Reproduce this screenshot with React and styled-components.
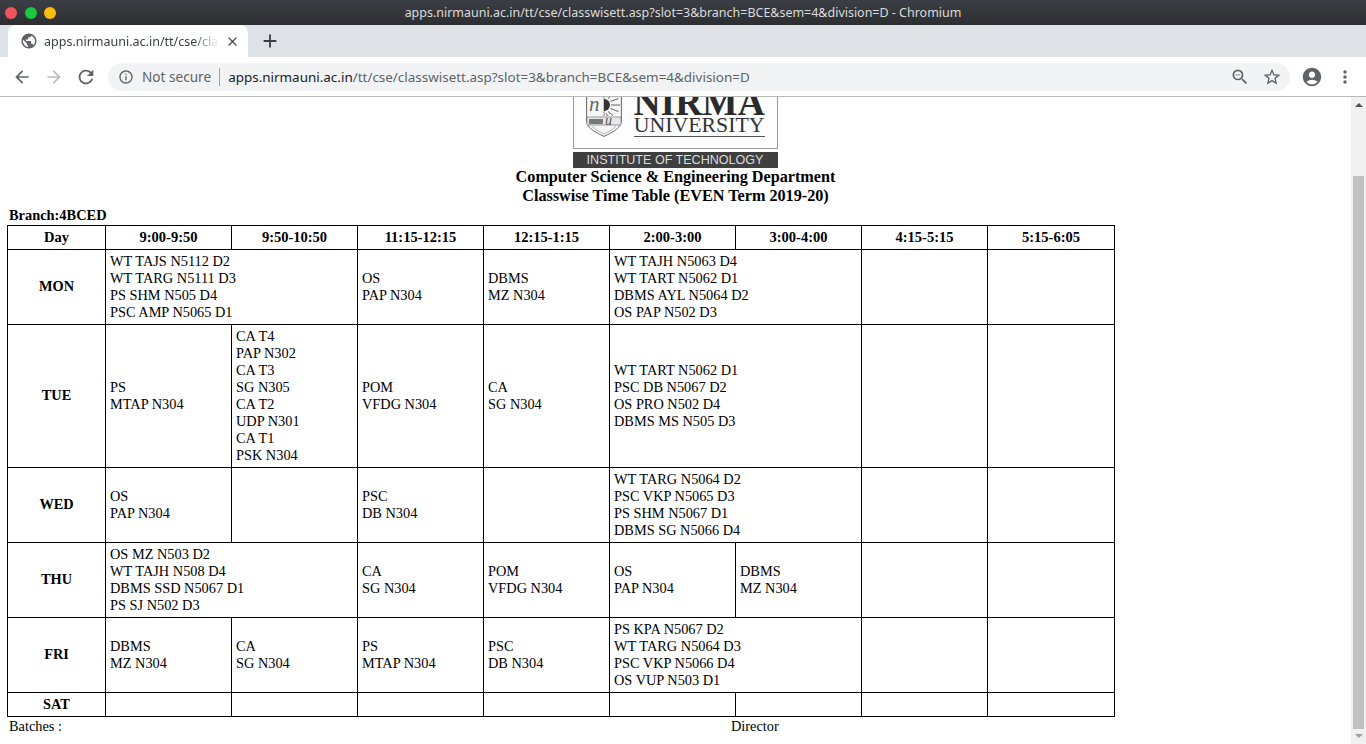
import React from "react";
import styled, { createGlobalStyle } from "styled-components";
import {
  MdArrowBack,
  MdArrowForward,
  MdRefresh,
  MdInfoOutline,
  MdStarBorder,
  MdAccountCircle,
  MdMoreVert,
  MdPublic,
  MdZoomOut,
  MdClose,
  MdAdd,
} from "react-icons/md";

const GlobalStyle = createGlobalStyle`
  html, body {
    margin: 0;
    padding: 0;
    height: 744px;
    overflow: hidden;
    background: #fff;
  }
`;

const times = ["9:00-9:50", "9:50-10:50", "11:15-12:15", "12:15-1:15", "2:00-3:00", "3:00-4:00", "4:15-5:15", "5:15-6:05"];

const rows = [
  {
    day: "MON",
    cells: [
      { span: 2, lines: ["WT TAJS N5112 D2", "WT TARG N5111 D3", "PS SHM N505 D4", "PSC AMP N5065 D1"] },
      { lines: ["OS", "PAP N304"] },
      { lines: ["DBMS", "MZ N304"] },
      { span: 2, lines: ["WT TAJH N5063 D4", "WT TART N5062 D1", "DBMS AYL N5064 D2", "OS PAP N502 D3"] },
      { lines: [] },
      { lines: [] },
    ],
  },
  {
    day: "TUE",
    cells: [
      { lines: ["PS", "MTAP N304"] },
      { lines: ["CA T4", "PAP N302", "CA T3", "SG N305", "CA T2", "UDP N301", "CA T1", "PSK N304"] },
      { lines: ["POM", "VFDG N304"] },
      { lines: ["CA", "SG N304"] },
      { span: 2, lines: ["WT TART N5062 D1", "PSC DB N5067 D2", "OS PRO N502 D4", "DBMS MS N505 D3"] },
      { lines: [] },
      { lines: [] },
    ],
  },
  {
    day: "WED",
    cells: [
      { lines: ["OS", "PAP N304"] },
      { lines: [] },
      { lines: ["PSC", "DB N304"] },
      { lines: [] },
      { span: 2, lines: ["WT TARG N5064 D2", "PSC VKP N5065 D3", "PS SHM N5067 D1", "DBMS SG N5066 D4"] },
      { lines: [] },
      { lines: [] },
    ],
  },
  {
    day: "THU",
    cells: [
      { span: 2, lines: ["OS MZ N503 D2", "WT TAJH N508 D4", "DBMS SSD N5067 D1", "PS SJ N502 D3"] },
      { lines: ["CA", "SG N304"] },
      { lines: ["POM", "VFDG N304"] },
      { lines: ["OS", "PAP N304"] },
      { lines: ["DBMS", "MZ N304"] },
      { lines: [] },
      { lines: [] },
    ],
  },
  {
    day: "FRI",
    cells: [
      { lines: ["DBMS", "MZ N304"] },
      { lines: ["CA", "SG N304"] },
      { lines: ["PS", "MTAP N304"] },
      { lines: ["PSC", "DB N304"] },
      { span: 2, lines: ["PS KPA N5067 D2", "WT TARG N5064 D3", "PSC VKP N5066 D4", "OS VUP N503 D1"] },
      { lines: [] },
      { lines: [] },
    ],
  },
  {
    day: "SAT",
    empty: true,
    cells: Array.from({ length: 8 }, () => ({ lines: [] })),
  },
];

export default function App() {
  return (
    <>
      <GlobalStyle />
      <Window>
        <TitleBar>
          <Lights>
            <Light $color="#f2545b" />
            <Light $color="#19c93f" />
            <Light $color="#fdbc0d" />
          </Lights>
          <TitleText>apps.nirmauni.ac.in/tt/cse/classwisett.asp?slot=3&amp;branch=BCE&amp;sem=4&amp;division=D - Chromium</TitleText>
        </TitleBar>

        <TabStrip>
          <Tab>
            <MdPublic size={18} color="#5f6368" />
            <TabLabel>apps.nirmauni.ac.in/tt/cse/classwisett.asp</TabLabel>
            <MdClose size={15} color="#45474a" />
          </Tab>
          <NewTab>
            <MdAdd size={22} color="#3c4043" />
          </NewTab>
        </TabStrip>

        <Toolbar>
          <NavButton><MdArrowBack size={20} color="#5f6368" /></NavButton>
          <NavButton><MdArrowForward size={20} color="#b9bcc0" /></NavButton>
          <NavButton><MdRefresh size={22} color="#5f6368" /></NavButton>
          <Omnibox>
            <MdInfoOutline size={16} color="#5f6368" />
            <Secure>Not secure</Secure>
            <Divider />
            <Url>
              <b>apps.nirmauni.ac.in</b>/tt/cse/classwisett.asp?slot=3&amp;branch=BCE&amp;sem=4&amp;division=D
            </Url>
            <OmniIcons>
              <MdZoomOut size={20} color="#5f6368" />
              <MdStarBorder size={20} color="#5f6368" />
            </OmniIcons>
          </Omnibox>
          <Profile><MdAccountCircle size={22} color="#5f6368" /></Profile>
          <Menu><MdMoreVert size={20} color="#5f6368" /></Menu>
        </Toolbar>

        <Viewport>
          <Page>
            <Logo>
              <LogoFrame>
                <Crest viewBox="0 0 36 41" aria-hidden="true">
                  <path d="M0.6 -2v26c0 8 8 12 17.4 16.4C27.4 36 35.4 32 35.4 24V-2" fill="#f6f6f6" stroke="#666" strokeWidth="1" />
                  <path d="M18 -2v22" stroke="#777" strokeWidth="0.8" />
                  <path d="M18 3a6 6 0 0 1 0 12z" fill="#333" />
                  <path d="M25 9h9M24.5 5.5l8-3M24.5 12.5l8 3M22 2.5l5-4M22 15.5l5 4M20 17l1.5 3" stroke="#555" strokeWidth="0.9" />
                  <text x="3" y="15" fontFamily="Liberation Serif, serif" fontStyle="italic" fontSize="21" fill="#666">n</text>
                  <path d="M1 21h34v8H1z" fill="#e8e8e8" stroke="#777" strokeWidth="0.7" />
                  <path d="M3 23h14v5H3z" fill="#777" />
                  <text x="19" y="29" fontFamily="Liberation Serif, serif" fontStyle="italic" fontSize="14" fill="#555">u</text>
                  <path d="M6 30c4 4 8 6 12 8 4-2 8-4 12-8" fill="none" stroke="#999" strokeWidth="0.7" />
                </Crest>
                <Wordmark>
                  <Nirma>NIRMA</Nirma>
                  <University>UNIVERSITY</University>
                </Wordmark>
              </LogoFrame>
              <Institute>INSTITUTE OF TECHNOLOGY</Institute>
            </Logo>
            <Heading>Computer Science &amp; Engineering Department</Heading>
            <Heading>Classwise Time Table (EVEN Term 2019-20)</Heading>
            <Branch>Branch:4BCED</Branch>
            <Timetable>
              <colgroup>
                <col width="98" />
                {times.map((t, i) => <col key={t} width={i === 7 ? 127 : 126} />)}
              </colgroup>
              <thead>
                <tr>
                  <HeadCell>Day</HeadCell>
                  {times.map((t) => <HeadCell key={t}>{t}</HeadCell>)}
                </tr>
              </thead>
              <tbody>
                {rows.map((row) => (
                  <tr key={row.day}>
                    <DayCell $empty={row.empty}>{row.day}</DayCell>
                    {row.cells.map((cell, i) => (
                      <SlotCell key={i} colSpan={cell.span || 1}>
                        {cell.lines.map((line) => <Line key={line}>{line}</Line>)}
                      </SlotCell>
                    ))}
                  </tr>
                ))}
              </tbody>
            </Timetable>
            <Footer>
              <span>Batches :</span>
              <Director>Director</Director>
            </Footer>
          </Page>
          <Scrollbar>
            <ArrowUp />
            <ThumbTrack>
              <Thumb />
            </ThumbTrack>
            <ArrowDown />
          </Scrollbar>
        </Viewport>
      </Window>
    </>
  );
}

const Window = styled.div`
  width: 1366px;
  height: 744px;
  display: flex;
  flex-direction: column;
  overflow: hidden;
`;

const TitleBar = styled.div`
  height: 25px;
  flex: none;
  display: flex;
  align-items: center;
  position: relative;
  background: linear-gradient(#3b3e44, #2c2e32);
`;

const Lights = styled.div`
  display: flex;
  gap: 7.5px;
  padding-left: 5px;
`;

const Light = styled.span`
  width: 12px;
  height: 12px;
  border-radius: 50%;
  background: ${(p) => p.$color};
`;

const TitleText = styled.div`
  position: absolute;
  left: 0;
  right: 0;
  text-align: center;
  color: #dcdcdc;
  font: 12.47px "Noto Sans", sans-serif;
`;

const TabStrip = styled.div`
  height: 32px;
  flex: none;
  display: flex;
  align-items: flex-end;
  background: #dee1e6;
  padding-left: 8px;
`;

const Tab = styled.div`
  width: 240px;
  height: 32px;
  box-sizing: border-box;
  display: flex;
  align-items: center;
  padding: 0 8px 0 12px;
  background: #fff;
  border-radius: 8px 8px 0 0;
`;

const TabLabel = styled.div`
  flex: 1;
  margin: 0 6px 0 6px;
  overflow: hidden;
  white-space: nowrap;
  color: #3c4043;
  font: 12.5px "Noto Sans", sans-serif;
  -webkit-mask-image: linear-gradient(to right, #000 85%, transparent);
  mask-image: linear-gradient(to right, #000 85%, transparent);
`;

const NewTab = styled.div`
  width: 22px;
  height: 32px;
  margin-left: 11px;
  display: flex;
  align-items: center;
  justify-content: center;
`;

const Toolbar = styled.div`
  height: 40px;
  flex: none;
  box-sizing: border-box;
  display: flex;
  align-items: center;
  background: #fff;
  border-bottom: 1px solid #b6b6b6;
  padding-left: 6px;
`;

const NavButton = styled.div`
  width: 32px;
  height: 28px;
  display: flex;
  align-items: center;
  justify-content: center;
`;

const Omnibox = styled.div`
  width: 1182px;
  height: 28px;
  margin-left: 6px;
  box-sizing: border-box;
  display: flex;
  align-items: center;
  padding: 0 8px 0 10px;
  background: #f1f3f4;
  border-radius: 14px;
`;

const Secure = styled.span`
  margin-left: 8px;
  color: #5f6368;
  font: 13.6px "Noto Sans", sans-serif;
`;

const Divider = styled.span`
  width: 1px;
  height: 18px;
  margin: 0 8px 0 8px;
  background: #9aa0a6;
`;

const Url = styled.div`
  flex: 1;
  color: #5f6368;
  font: 13.45px "Noto Sans", sans-serif;
  white-space: nowrap;

  b {
    color: #202124;
    font-weight: 400;
  }
`;

const OmniIcons = styled.div`
  display: flex;
  align-items: center;
  gap: 12px;
`;

const Profile = styled.div`
  width: 22px;
  height: 28px;
  margin-left: 11px;
  display: flex;
  align-items: center;
`;

const Menu = styled.div`
  width: 20px;
  height: 28px;
  margin-left: 12px;
  display: flex;
  align-items: center;
`;

const Viewport = styled.div`
  flex: 1;
  min-height: 0;
  display: flex;
`;

const Page = styled.div`
  flex: 1;
  min-width: 0;
  overflow: hidden;
  box-sizing: border-box;
  padding: 0 0 0 7px;
  font-family: "Liberation Serif", "Times New Roman", serif;
  font-size: 14.33px;
  color: #000;
`;

const Logo = styled.div`
  width: 205px;
  margin: 0 auto;
  position: relative;
  left: -4px;
`;

const LogoFrame = styled.div`
  height: 52px;
  box-sizing: border-box;
  display: flex;
  align-items: flex-end;
  padding: 0 12px 11px 12px;
  overflow: hidden;
  border: 1px solid #9a9a9a;
  border-top: none;
  background: #fdfdfd;
`;

const Crest = styled.svg`
  width: 36px;
  height: 41px;
  flex: none;
`;

const Wordmark = styled.div`
  margin-left: 12px;
  display: flex;
  flex-direction: column;
  align-items: center;
`;

const Nirma = styled.div`
  height: 25px;
  font: bold 37.5px/24px "Liberation Serif", serif;
  color: #2b2b2b;
  white-space: nowrap;
`;

const University = styled.div`
  font: 21.8px/18px "Liberation Serif", serif;
  color: #333;
  padding-bottom: 2px;
  border-bottom: 1px solid #555;
  white-space: nowrap;
`;

const Institute = styled.div`
  margin-top: 3px;
  height: 16px;
  background: #3f3f3f;
  color: #ddd;
  text-align: center;
  font: 12.55px/16px "Liberation Sans", sans-serif;
`;

const Heading = styled.div`
  text-align: center;
  font-weight: bold;
  font-size: 16.2px;
  line-height: 19px;
  padding-right: 7px;
`;

const Branch = styled.div`
  margin-top: 2px;
  padding-left: 2px;
  font-weight: bold;
  line-height: 15px;
  font-size: 14.4px;
`;

const Timetable = styled.table`
  width: 1107px;
  table-layout: fixed;
  border-collapse: collapse;
  margin-top: 2px;
  border: 1px solid #000;
`;

const HeadCell = styled.th`
  height: 23px;
  padding: 0 4px;
  border: 1px solid #000;
  font-size: 14.5px;
  font-weight: bold;
  text-align: center;
`;

const DayCell = styled.td`
  padding: ${(p) => (p.$empty ? "3px 4px 4px" : "1px 4px 4px")};
  border: 1px solid #000;
  font-weight: bold;
  text-align: center;
  line-height: 16px;
`;

const SlotCell = styled.td`
  padding: 3px 4px;
  border: 1px solid #000;
  vertical-align: middle;
  line-height: 17px;
  white-space: nowrap;
`;

const Line = styled.div`
  line-height: 17px;
`;

const Footer = styled.div`
  position: relative;
  padding-left: 2px;
  line-height: 17px;
  margin-top: 1px;
`;

const Director = styled.span`
  position: absolute;
  left: 724px;
  top: 0;
`;

const Scrollbar = styled.div`
  width: 15px;
  flex: none;
  display: flex;
  flex-direction: column;
  align-items: center;
  background: #f1f1f1;
`;

const ArrowUp = styled.div`
  margin-top: 6px;
  flex: none;
  width: 0;
  height: 0;
  border-left: 4px solid transparent;
  border-right: 4px solid transparent;
  border-bottom: 4px solid #505050;
`;

const ThumbTrack = styled.div`
  flex: 1;
  width: 100%;
  padding-top: 69px;
  box-sizing: border-box;
  display: flex;
  justify-content: center;
`;

const Thumb = styled.div`
  width: 11px;
  height: 553px;
  background: #c1c1c1;
`;

const ArrowDown = styled.div`
  margin-bottom: 6px;
  flex: none;
  width: 0;
  height: 0;
  border-left: 4px solid transparent;
  border-right: 4px solid transparent;
  border-top: 4px solid #a0a0a0;
`;
